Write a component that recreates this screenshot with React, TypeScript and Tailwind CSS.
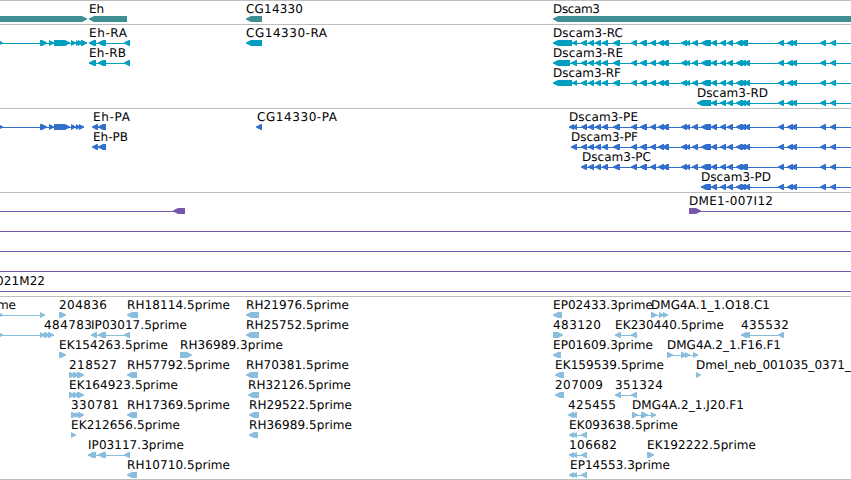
import { clsx } from 'clsx';

type Exon = [start: number, end: number];

interface Feature {
  label?: string;
  // label start and drawn width
  at?: number;
  width?: number;
  dir: 'left' | 'right';
  exons: Exon[];
  // connecting intron line
  line?: Exon;
}

interface Track {
  name: string;
  color: string;
  rows: Feature[][];
}

const VIEW_WIDTH = 851;

const left = (label: string, at: number, width: number, exons: Exon[], line?: Exon): Feature => ({
  label, at, width, dir: 'left', exons, line,
});

const right = (label: string, at: number, width: number, exons: Exon[], line?: Exon): Feature => ({
  label, at, width, dir: 'right', exons, line,
});

const span = (start: number, end: number): Feature => ({ dir: 'right', exons: [], line: [start, end] });

// Exons shared by the Dscam3 isoforms
const dscamFive: Exon[] = [
  [581, 587], [588, 594], [595, 601], [602, 608], [613, 620], [631, 637], [640, 647],
  [650, 656], [658, 664], [662, 669], [681, 687], [685, 690], [692, 698],
];
const dscamMid: Exon[] = [[711, 717], [720, 726], [727, 733], [736, 743]];
const dscamThree: Exon[] = [[778, 784], [787, 793], [791, 797], [820, 826], [830, 836]];
const shortEnd: Exon[] = [[740, 748]];
const longEnd: Exon[] = [[740, 746], [744, 750]];

const dscam = (head: Exon[], end: Exon[]): Exon[] => [
  ...head, ...dscamFive, [701, 711], ...dscamMid, ...end, ...dscamThree,
];
const dscamTail = (start: number): Exon[] => [[start, 711], ...dscamMid, ...longEnd, ...dscamThree];

const ehExons: Exon[] = [[89, 96], [98, 106], [124, 130]];
const upstream: Exon[] = [[-3, 3], [40, 47], [49, 54], [54, 70], [71, 76], [76, 80]];
const epExons: Exon[] = [[569, 574], [572, 577], [581, 587]];

const tracks: Track[] = [
  {
    name: 'gene',
    color: 'text-[#3d8f94]',
    rows: [
      [
        { dir: 'right', exons: [[-20, 87]] },
        left('Eh', 89, 15, [[89, 127]]),
        left('CG14330', 246, 57, [[246, 262]]),
        left('Dscam3', 553, 47, [[553, 870]]),
      ],
    ],
  },
  {
    name: 'mRNA',
    color: 'text-[#009fbf]',
    rows: [
      [
        { dir: 'right', exons: [...upstream, [78, 83], [81, 87]], line: [0, 87] },
        left('Eh-RA', 89, 38, ehExons, [89, 130]),
        left('CG14330-RA', 246, 81, [[246, 262]]),
        left('Dscam3-RC', 553, 70, dscam([[553, 572], [572, 577]], shortEnd), [553, 851]),
      ],
      [
        left('Eh-RB', 89, 37, ehExons, [89, 130]),
        left('Dscam3-RE', 553, 70, dscam([[553, 570], [571, 577]], longEnd), [553, 851]),
      ],
      [left('Dscam3-RF', 553, 68, dscam([[553, 572], [572, 577]], longEnd), [553, 851])],
      [left('Dscam3-RD', 697, 71, dscamTail(697), [697, 851])],
    ],
  },
  {
    name: 'CDS',
    color: 'text-[#326ecb]',
    rows: [
      [
        { dir: 'right', exons: [...upstream, [79, 84]], line: [0, 84] },
        left('Eh-PA', 93, 37, [[92, 98], [98, 106]], [93, 106]),
        left('CG14330-PA', 257, 80, [[256, 262]]),
        left('Dscam3-PE', 569, 69, dscam([[569, 574], [572, 577]], longEnd), [569, 851]),
      ],
      [
        left('Eh-PB', 93, 35, [[92, 98], [98, 106]], [93, 106]),
        left('Dscam3-PF', 571, 67, dscam([[571, 577]], longEnd), [571, 851]),
      ],
      [left('Dscam3-PC', 582, 69, dscam([], shortEnd), [582, 851])],
      [left('Dscam3-PD', 701, 70, dscamTail(701), [701, 851])],
    ],
  },
  {
    name: 'BAC',
    color: 'text-[#7558a9]',
    rows: [
      [
        { dir: 'left', exons: [[173, 185]], line: [0, 185] },
        right('DME1-007I12', 689, 84, [[689, 701]], [689, 851]),
      ],
      [span(0, 851)],
      [span(0, 851)],
      [span(0, 851)],
      [right('021M22', -4, 49, [], [0, 851])],
    ],
  },
  {
    name: 'EST',
    color: 'text-[#88bddd]',
    rows: [
      [
        right('me', -3, 19, [[-3, 3], [40, 45]], [0, 45]),
        right('204836', 59, 48, [[59, 66]]),
        left('RH18114.5prime', 127, 103, [[127, 138]]),
        left('RH21976.5prime', 246, 103, [[246, 259]]),
        left('EP02433.3prime', 553, 100, [[553, 562]]),
        right('DMG4A.1_1.O18.C1', 651, 119, [[651, 657], [659, 664], [663, 668]], [651, 668]),
      ],
      [
        right('484783', 44, 48, [[-3, 3], [40, 45], [44, 50], [48, 54]], [0, 54]),
        left('IP03017.5prime', 91, 96, [[91, 97], [98, 106], [124, 130]], [91, 130]),
        left('RH25752.5prime', 246, 103, [[246, 259]]),
        right('483120', 553, 48, [[553, 563]]),
        left('EK230440.5prime', 615, 109, [[615, 621], [631, 637]], [615, 637]),
        left('435532', 741, 48, [[741, 747], [744, 750], [778, 784]], [741, 784]),
      ],
      [
        right('EK154263.5prime', 59, 109, [[59, 66]]),
        right('RH36989.3prime', 180, 103, [[180, 192]]),
        left('EP01609.3prime', 553, 100, [[553, 561]]),
        right('DMG4A.2_1.F16.F1', 667, 114, [[667, 673], [681, 687], [685, 690], [693, 698]], [667, 698]),
      ],
      [
        right('218527', 69, 48, [[69, 75], [73, 79], [77, 84]]),
        left('RH57792.5prime', 127, 103, [[127, 137]]),
        left('RH70381.5prime', 246, 103, [[246, 258]]),
        left('EK159539.5prime', 555, 109, [[555, 564]]),
        right('Dmel_neb_001035_0371_', 696, 155, [[696, 701]]),
      ],
      [
        right('EK164923.5prime', 69, 109, [[69, 75], [73, 79], [77, 84]]),
        left('RH32126.5prime', 248, 103, [[248, 259]]),
        left('207009', 555, 48, [[555, 564]]),
        left('351324', 615, 48, [[615, 621], [631, 637]], [615, 637]),
      ],
      [
        right('330781', 71, 48, [[71, 77], [75, 80], [78, 84]]),
        left('RH17369.5prime', 127, 103, [[127, 137]]),
        left('RH29522.5prime', 249, 103, [[249, 259]]),
        left('425455', 568, 48, [[568, 574], [571, 577]]),
        right('DMG4A.2_1.J20.F1', 632, 112, [[632, 638], [641, 648], [651, 656]], [632, 656]),
      ],
      [
        right('EK212656.5prime', 71, 109, [[71, 76]]),
        left('RH36989.5prime', 249, 103, [[249, 258]]),
        left('EK093638.5prime', 569, 109, epExons, [569, 587]),
      ],
      [
        left('IP03117.3prime', 88, 96, [[88, 96], [98, 106], [124, 130]], [88, 130]),
        left('106682', 569, 48, epExons, [569, 587]),
        right('EK192222.5prime', 647, 109, [[647, 654]]),
      ],
      [
        left('RH10710.5prime', 127, 103, [[127, 137]]),
        left('EP14553.3prime', 570, 100, epExons, [569, 587]),
      ],
    ],
  },
];

function exonPoints([start, end]: Exon, dir: Feature['dir']) {
  const head = Math.min(5, end - start);
  if (dir === 'left') {
    return `${start},15.5 ${start},16.5 ${start + head},19 ${end},19 ${end},13 ${start + head},13`;
  }
  return `${end},15.5 ${end},16.5 ${end - head},19 ${start},19 ${start},13 ${end - head},13`;
}

function FeatureGlyph({ feature }: { feature: Feature }) {
  const { label, at, width, dir, exons, line } = feature;

  return (
    <g>
      {line && <rect x={line[0]} y={16} width={line[1] - line[0]} height={1} />}
      {exons.map((exon, i) => (
        <polygon key={i} points={exonPoints(exon, dir)} />
      ))}
      {label && (
        <text x={at} y={10} textLength={width} className="fill-black">
          {label}
        </text>
      )}
    </g>
  );
}

function TrackPanel({ track, last }: { track: Track; last: boolean }) {
  return (
    <section aria-label={track.name} className={clsx('border-t border-[#bebebe] pt-0.5', track.color, !last && 'pb-px')}>
      {track.rows.map((row, i) => (
        <svg
          key={i}
          width={VIEW_WIDTH}
          height={20}
          className="block overflow-visible fill-current font-['DejaVu_Sans',sans-serif] text-[12px] [text-rendering:geometricPrecision]"
        >
          {row.map((feature, j) => (
            <FeatureGlyph key={j} feature={feature} />
          ))}
        </svg>
      ))}
    </section>
  );
}

export default function App() {
  return (
    <main className="h-[480px] w-[851px] overflow-hidden border-b border-[#bebebe] bg-white">
      {tracks.map((track, i) => (
        <TrackPanel key={track.name} track={track} last={i === tracks.length - 1} />
      ))}
    </main>
  );
}
